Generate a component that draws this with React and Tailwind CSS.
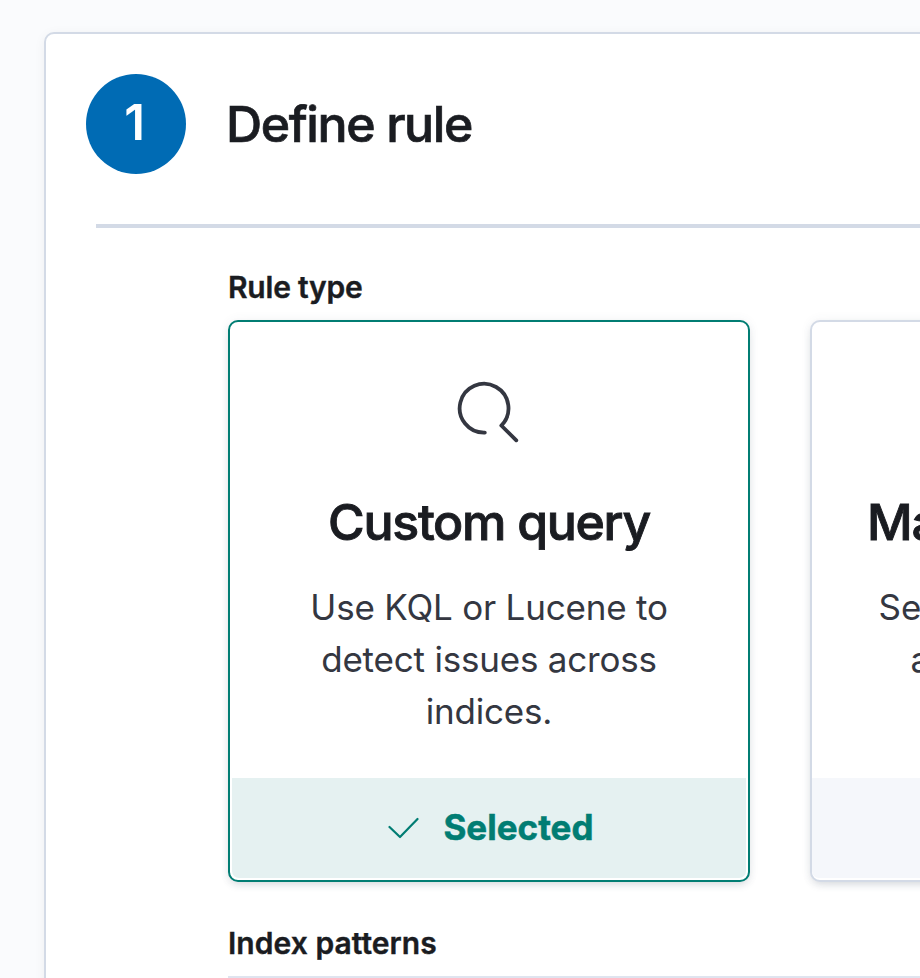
export default function App() {
  return (
    <div className="h-[978px] w-[920px] overflow-hidden bg-[#fafbfd] pl-11 pt-8 font-[Inter,sans-serif] text-[#1a1c21]">
      <section className="h-[1000px] w-[1360px] rounded-[10px] border-2 border-[#d3dae6] bg-white pl-10 pt-10 shadow-[0_2px_12px_rgba(0,0,0,0.05)]">
        <header className="flex items-center gap-10">
          <div className="flex size-[100px] items-center justify-center rounded-full bg-[#006bb4] pb-1 pr-[3px] text-[49px] font-semibold leading-none text-white">1</div>
          <h1 className="text-[50px] font-medium leading-[64px] tracking-[-1.4px] [-webkit-text-stroke:0.7px]">Define rule</h1>
        </header>
        <div className="ml-2.5 mt-[50px] h-1 bg-[#d3dae6]" />
        <div className="ml-[142px] mt-[39px] flex flex-col">
          <h2 className="h-10 text-[30px] font-semibold leading-10 tracking-[-0.2px] [-webkit-text-stroke:0.4px]">Rule type</h2>
          <div className="mt-[13px] flex gap-[60px]">
            <article className="flex h-[562px] w-[522px] shrink-0 flex-col rounded-[10px] border-2 border-[#017d73] bg-white p-0.5 text-center shadow-[0_4px_8px_-2px_rgba(65,78,101,0.2),0_0_12px_rgba(65,78,101,0.06)]">
              <svg className="mx-auto mt-[56px] size-16 shrink-0" viewBox="0 0 64 64" fill="none" stroke="#343741" strokeWidth="3.8" strokeLinecap="round" strokeLinejoin="round">
                <path d="M27.8 52.6A24.4 24.4 0 1 1 44.3 45.5L59.3 60.3" />
              </svg>
              <h3 className="mt-[46px] text-[50px] font-medium leading-[64px] tracking-[-1.3px] [-webkit-text-stroke:0.9px]">Custom query</h3>
              <p className="mt-[27px] text-[35px] leading-[52px] tracking-[-0.2px] text-[#343741]">Use KQL or Lucene to<br />detect issues across<br />indices.</p>
              <div className="mt-auto flex h-[100px] items-center justify-center gap-6 rounded-b-[7px] bg-[#e5f1f1] pb-0.5 pl-[3px] text-[35px] font-bold text-[#017d73]">
                <svg className="mt-0.5 h-6 w-8" viewBox="0 0 32 24" fill="none" stroke="currentColor" strokeWidth="2.2" strokeLinecap="round" strokeLinejoin="round">
                  <path d="M2.5 11L13 21L30.5 3" />
                </svg>
                <span className="[-webkit-text-stroke:0.5px]">Selected</span>
              </div>
            </article>
            <article className="flex h-[562px] w-[522px] shrink-0 flex-col rounded-[10px] border-2 border-[#d3dae6] bg-white pb-0.5 text-center shadow-[0_4px_8px_-2px_rgba(65,78,101,0.2),0_0_12px_rgba(65,78,101,0.06)]">
              <h3 className="mt-[168px] text-[50px] font-medium leading-[64px] tracking-[-1.3px] [-webkit-text-stroke:0.9px]">Machine Learning</h3>
              <p className="mt-[27px] text-[35px] leading-[52px] tracking-[0.15px] text-[#343741]">Select ML job to detect<br />anomalous activity.</p>
              <div className="mt-auto h-[100px] rounded-b-[7px] bg-[#f5f7fb]" />
            </article>
          </div>
          <h2 className="mt-[41px] h-10 text-[30px] font-semibold leading-10 tracking-[0.05px] [-webkit-text-stroke:0.4px]">Index patterns</h2>
          <div className="mt-[13px] h-20 border-t-2 border-[#dfe4ef]" />
        </div>
      </section>
    </div>
  );
}
